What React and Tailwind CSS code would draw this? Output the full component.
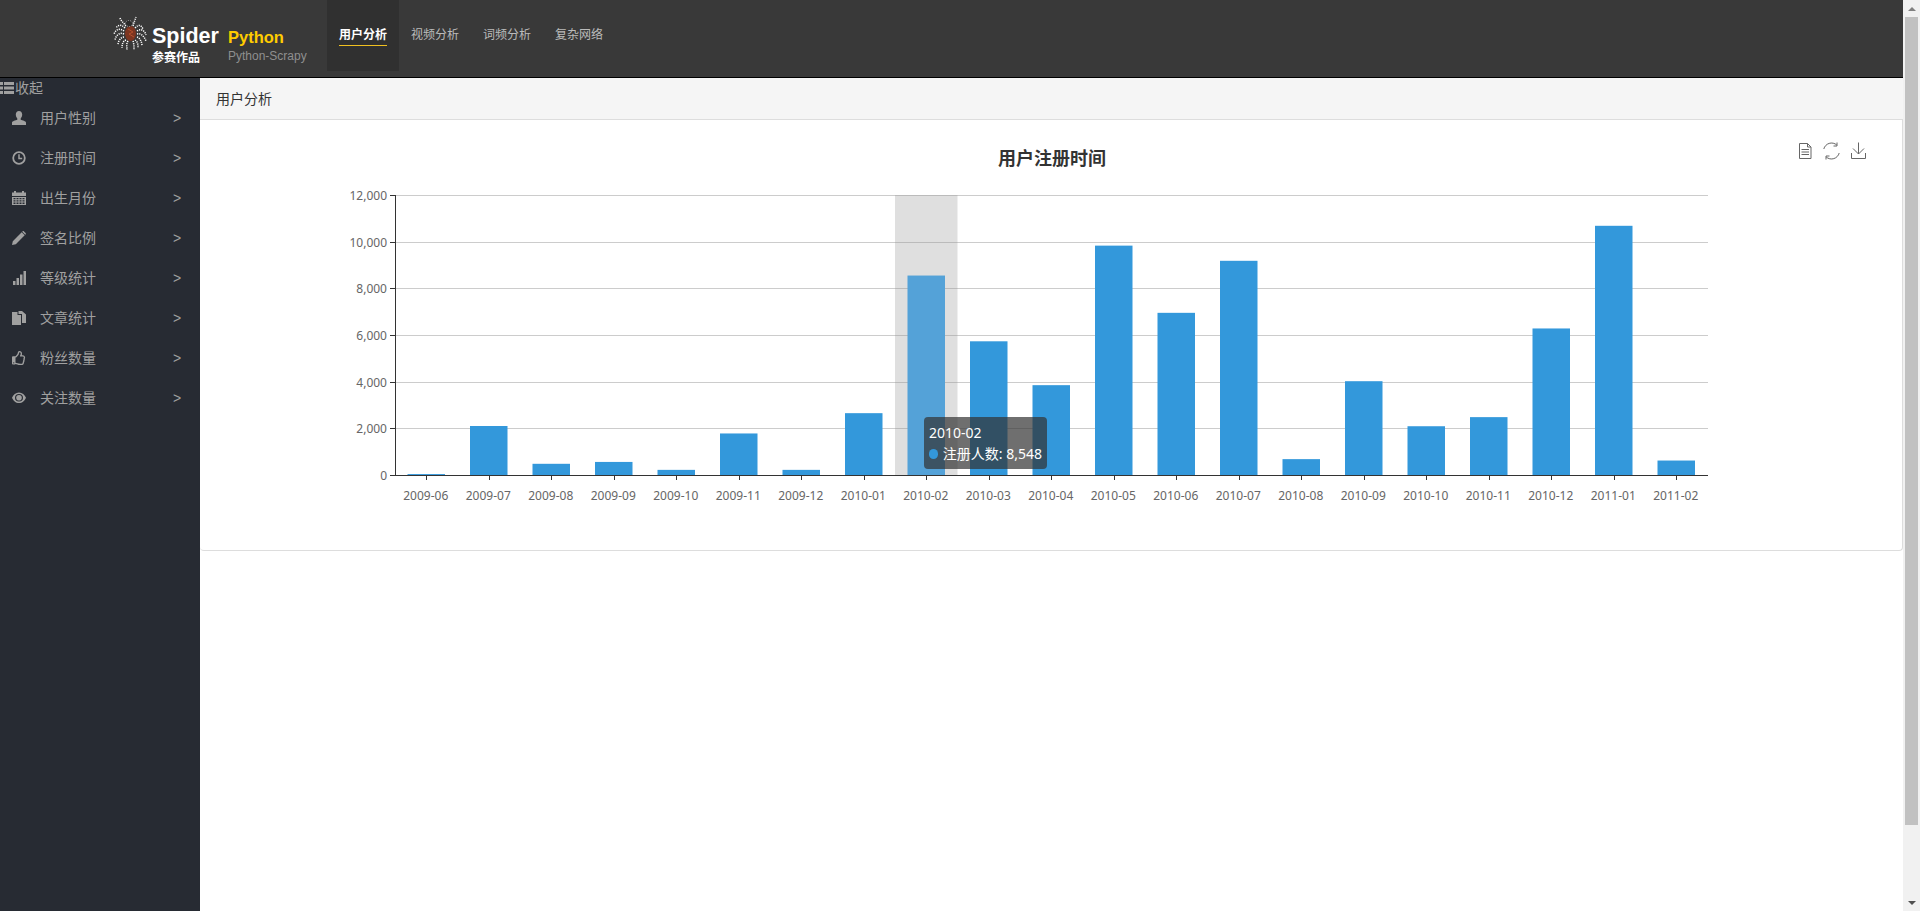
import React from 'react';
import { FaRegThumbsUp } from 'react-icons/fa';

const FONT = "font-['Liberation_Sans','Noto_Sans_CJK_SC',sans-serif]";

const tabs = ['用户分析', '视频分析', '词频分析', '复杂网络'];

const UserIcon = () => (
    <svg width="14" height="14" viewBox="0 0 14 14" fill="currentColor">
        <path d="M7 0c2 0 3.200 1.500 3.200 3.600 0 1.500-.6 3-1.500 3.800v1.300c1.800.6 5.100 1.300 5.300 2.700V14H0v-2.600c.2-1.400 3.500-2.100 5.300-2.700V7.400c-.9-.8-1.500-2.300-1.500-3.800C3.800 1.500 5 0 7 0z" />
    </svg>
);
const ClockIcon = () => (
    <svg width="14" height="14" viewBox="0 0 14 14" fill="none" stroke="currentColor">
        <circle cx="7" cy="7" r="5.800" strokeWidth="1.800" />
        <path d="M7 3.200V7.400H10.200" strokeWidth="1.500" />
    </svg>
);
const CalendarIcon = () => (
    <svg width="14" height="14" viewBox="0 0 14 14" fill="currentColor">
        <path d="M0 1.500h2V0h2v1.500h6V0h2v1.500h2v3.500H0z" />
        <path d="M0 6h14v8H0zm1.500 1v1.300h2V7zm3 0v1.300h2V7zm3 0v1.300h2V7zm3 0v1.300h2V7zm-9 2.300v1.300h2V9.300zm3 0v1.300h2V9.300zm3 0v1.300h2V9.300zm3 0v1.300h2V9.300zm-9 2.300v1.300h2v-1.300zm3 0v1.300h2v-1.300zm3 0v1.300h2v-1.300zm3 0v1.300h2v-1.300z" fillRule="evenodd" />
    </svg>
);
const PencilIcon = () => (
    <svg width="14" height="14" viewBox="0 0 14 14" fill="currentColor">
        <path d="M0 14l.8-3.800L9.700 1.300l3 3-8.900 8.900zM10.500.5C11 0 11.600 0 12 .4l1.600 1.600c.4.400.4 1 0 1.500l-.4.300-3-3z" />
    </svg>
);
const SignalIcon = () => (
    <svg width="14" height="14" viewBox="0 0 14 14" fill="currentColor">
        <rect x="1" y="10" width="2.500" height="4" />
        <rect x="4.500" y="7" width="2.500" height="7" />
        <rect x="8" y="3.500" width="2.500" height="10.500" />
        <rect x="11.500" y="0" width="2.500" height="14" />
    </svg>
);
const PasteIcon = () => (
    <svg width="14" height="14" viewBox="0 0 14 14" fill="currentColor">
        <path d="M0 1h5.500v3H9v10H0z" />
        <path d="M6.500 0H10l4 3.500V12h-4V3H6.500z" />
    </svg>
);
const ThumbIcon = () => <FaRegThumbsUp size={14} />;
const EyeIcon = () => (
    <svg width="14" height="14" viewBox="0 0 14 14" fill="currentColor">
        <path fillRule="evenodd" d="M7 1.500c3.200 0 5.800 2.300 7 5.200-1.200 2.900-3.800 5.300-7 5.300S1.200 9.600 0 6.700C1.200 3.800 3.800 1.500 7 1.500zM7 3a4 3.800 0 100 7.600A4 3.800 0 007 3z" />
        <circle cx="7" cy="6.800" r="2.800" />
    </svg>
);

const menu = [
    ['用户性别', UserIcon],
    ['注册时间', ClockIcon],
    ['出生月份', CalendarIcon],
    ['签名比例', PencilIcon],
    ['等级统计', SignalIcon],
    ['文章统计', PasteIcon],
    ['粉丝数量', ThumbIcon],
    ['关注数量', EyeIcon],
];

const data = [
    ['2009-06', 40], ['2009-07', 2100], ['2009-08', 480], ['2009-09', 560], ['2009-10', 220],
    ['2009-11', 1780], ['2009-12', 220], ['2010-01', 2650], ['2010-02', 8548], ['2010-03', 5730],
    ['2010-04', 3850], ['2010-05', 9830], ['2010-06', 6950], ['2010-07', 9180], ['2010-08', 680],
    ['2010-09', 4020], ['2010-10', 2090], ['2010-11', 2480], ['2010-12', 6280], ['2011-01', 10680],
    ['2011-02', 620],
];

// chart geometry, in page pixels (the svg viewBox starts at the card's corner)
const LEFT = 395;
const STEP = 62.5;
const ZERO = 475;
const UNIT = 280 / 12000;
const yTicks = [0, 2000, 4000, 6000, 8000, 10000, 12000];

const SpiderLogo = () => (
    <svg width="34" height="35" viewBox="0 0 34 35" fill="none">
        <g stroke="#fff" strokeWidth="1.500" strokeDasharray="1.200 1">
            <path d="M13 10C10 6 8 5 7 2" />
            <path d="M20 10C21 6 22 4 23 1" />
            <path d="M12 12C8 8 5 9 3 12" />
            <path d="M22 12C26 8 28 9 30 13" />
            <path d="M11 15C7 12 3 13 1 18" />
            <path d="M24 15C28 12 32 15 33 19" />
            <path d="M11 18C7 16 3 19 2 24" />
            <path d="M24 18C28 17 31 20 33 25" />
            <path d="M11 21C8 21 5 25 5 29" />
            <path d="M24 21C27 22 29 26 29 30" />
            <path d="M13 24C10 25 9 28 9 32" />
            <path d="M22 24C25 26 25 29 25 32" />
            <path d="M15 25C13 28 14 31 14 34" />
            <path d="M20 25C21 28 21 31 21 34" />
        </g>
        <ellipse cx="17.500" cy="17.500" rx="5.500" ry="7.500" fill="#7d3520" />
        <path d="M15 13l5 3-4 2 5 3" stroke="#b5502c" strokeWidth="1" />
        <ellipse cx="16" cy="7.500" rx="3.500" ry="3" fill="#2a2a2a" stroke="#bbb" strokeWidth="0.800" strokeDasharray="1 1" />
    </svg>
);

const Chart = () => (
    <svg width="1702" height="430" viewBox="200 120 1702 430" className="block">
        <text x="1052" y="165" textAnchor="middle" fontSize="18" fontWeight="700" fill="#333" fontFamily="'Noto Sans CJK SC', sans-serif">用户注册时间</text>

        {/* toolbox */}
        <g fill="none" stroke="#666" strokeWidth="1">
            <path d="M1799.500 143.500h8l3.500 3.500v11.500h-11.500zM1807.500 143.500v3.500h3.500M1801.500 149.500h7.500M1801.500 152h7.500M1801.500 154.500h7.500" />
            <path d="M1823.800 149a8 8 0 0 1 13-4M1839.200 153a8 8 0 0 1-13 4" />
            <path d="M1837 142.500v3.500h-3.500M1826 159.500v-3.500h3.500" />
            <path d="M1858.500 142.500v11.500M1853 148.500l5.500 5.500 5.500-5.500M1851.500 153v5.500h14V153" />
        </g>

        {/* grid */}
        {yTicks.map((v) => {
            const y = Math.round(ZERO - v * UNIT) + 0.5;
            return (
                <g key={v}>
                    {v > 0 && <line x1={LEFT} x2="1708" y1={y} y2={y} stroke="#ccc" />}
                    <line x1={LEFT - 5} x2={LEFT} y1={y} y2={y} stroke="#333" />
                    <text x={LEFT - 8} y={y + 4} textAnchor="end" fontSize="12" fill="#666" fontFamily="'Noto Sans', sans-serif">{v.toLocaleString('en-US')}</text>
                </g>
            );
        })}

        <rect x={LEFT + 8 * STEP} y="195" width={STEP} height="280" fill="#969696" fillOpacity="0.3" />

        {/* bars */}
        {data.map(([label, value], i) => {
            const h = value * UNIT;
            return (
                <rect key={label} x={LEFT + i * STEP + 12.5} y={ZERO - h} width="37.500" height={h} fill={i === 8 ? '#54a2d8' : '#3398db'} />
            );
        })}

        {/* x axis */}
        <line x1={LEFT + 0.5} x2={LEFT + 0.5} y1="195" y2="476" stroke="#333" />
        <line x1={LEFT} x2="1708" y1="475.500" y2="475.500" stroke="#333" />
        {data.map(([label], i) => (
            <g key={label}>
                <line x1={Math.round(LEFT + i * STEP + STEP / 2) + 0.5} x2={Math.round(LEFT + i * STEP + STEP / 2) + 0.5} y1="475" y2="480" stroke="#333" />
                <text x={LEFT + i * STEP + STEP / 2 - 0.5} y="500" textAnchor="middle" fontSize="12" fill="#666" fontFamily="'Noto Sans', sans-serif">{label}</text>
            </g>
        ))}
    </svg>
);

const App = () => {
    return (
        <div className={`flex h-[911px] w-[1920px] overflow-hidden bg-white ${FONT}`}>
            <div className="flex w-[1903px] flex-col">
                {/* top bar */}
                <header className="flex h-[78px] shrink-0 border-b border-black bg-[#393939]">
                    <div className="ml-[113px] mt-[16px] shrink-0">
                        <SpiderLogo />
                    </div>
                    <div className="ml-[5px] mt-[22px] flex w-[76px] shrink-0 flex-col">
                        <span className="text-[21.5px] leading-[28px] font-bold text-white">Spider</span>
                        <span className="text-[12px] leading-[16px] font-bold text-white">参赛作品</span>
                    </div>
                    <div className="mt-[27px] flex w-[99px] shrink-0 flex-col">
                        <span className="text-[16.5px] leading-[20px] font-bold text-[#ffcc00]">Python</span>
                        <span className="text-[12px] leading-[18px] text-[#8f8f8f]">Python-Scrapy</span>
                    </div>
                    <nav className="flex h-[71px] items-start">
                        {tabs.map((t, i) => (
                            <a key={t} className={`flex h-[71px] w-[72px] justify-center pt-[26px] text-[12px] ${i === 0 ? 'bg-[#303030] font-bold text-white' : 'text-[#bbb]'}`}>
                                <span className={`h-[20px] leading-[18px] ${i === 0 ? 'border-b border-[#f0c020]' : ''}`}>{t}</span>
                            </a>
                        ))}
                    </nav>
                </header>

                <div className="flex min-h-0 flex-1">
                    {/* sidebar */}
                    <aside className="w-[200px] shrink-0 bg-[#272b33] text-sm text-[#a0a0a0]">
                        <div className="flex h-[20px] items-center leading-[20px]">
                            <svg width="15" height="13" viewBox="0 0 15 13" fill="currentColor">
                                <path d="M0 0h3v3H0zM4 0h10v3H4zM0 4.500h3v3H0zM4 4.500h10v3H4zM0 9h3v3H0zM4 9h10v3H4z" />
                            </svg>
                            <span>收起</span>
                        </div>
                        {menu.map(([name, Icon]) => (
                            <div key={name} className="flex h-10 items-center pl-3">
                                <span className="flex w-[28px] shrink-0"><Icon /></span>
                                <span className="w-[133px]">{name}</span>
                                <span>&gt;</span>
                            </div>
                        ))}
                    </aside>

                    {/* content */}
                    <main className="min-w-0 flex-1">
                        <div className="flex h-[42px] items-center border-b border-[#ddd] bg-[#f5f5f5] pl-4 text-sm text-[#333]">
                            用户分析
                        </div>
                        <div className="relative h-[431px] rounded-b border-b border-r border-[#ddd]">
                            <Chart />
                            {/* tooltip */}
                            <div className="absolute left-[724px] top-[297px] h-[52px] w-[123px] rounded bg-[#323232]/70 p-[5px] font-['Noto_Sans','Noto_Sans_CJK_SC',sans-serif] text-[14px] leading-[21px] whitespace-nowrap text-white">
                                <div>2010-02</div>
                                <div className="flex items-center">
                                    <span className="mr-[5px] h-[10px] w-[10px] rounded-full bg-[#3398db]" />
                                    注册人数: 8,548
                                </div>
                            </div>
                        </div>
                    </main>
                </div>
            </div>

            {/* page scrollbar */}
            <div className="flex w-[17px] shrink-0 flex-col items-center bg-[#f1f1f1]">
                <div className="flex h-[17px] w-full items-center justify-center">
                    <div className="h-0 w-0 border-x-[4px] border-b-[4px] border-x-transparent border-b-[#808080]" />
                </div>
                <div className="h-[808px] w-[13px] bg-[#c1c1c1]" />
                <div className="flex-1" />
                <div className="flex h-[17px] w-full items-center justify-center">
                    <div className="h-0 w-0 border-x-[4px] border-t-[4px] border-x-transparent border-t-[#505050]" />
                </div>
            </div>
        </div>
    );
};

export default App;
